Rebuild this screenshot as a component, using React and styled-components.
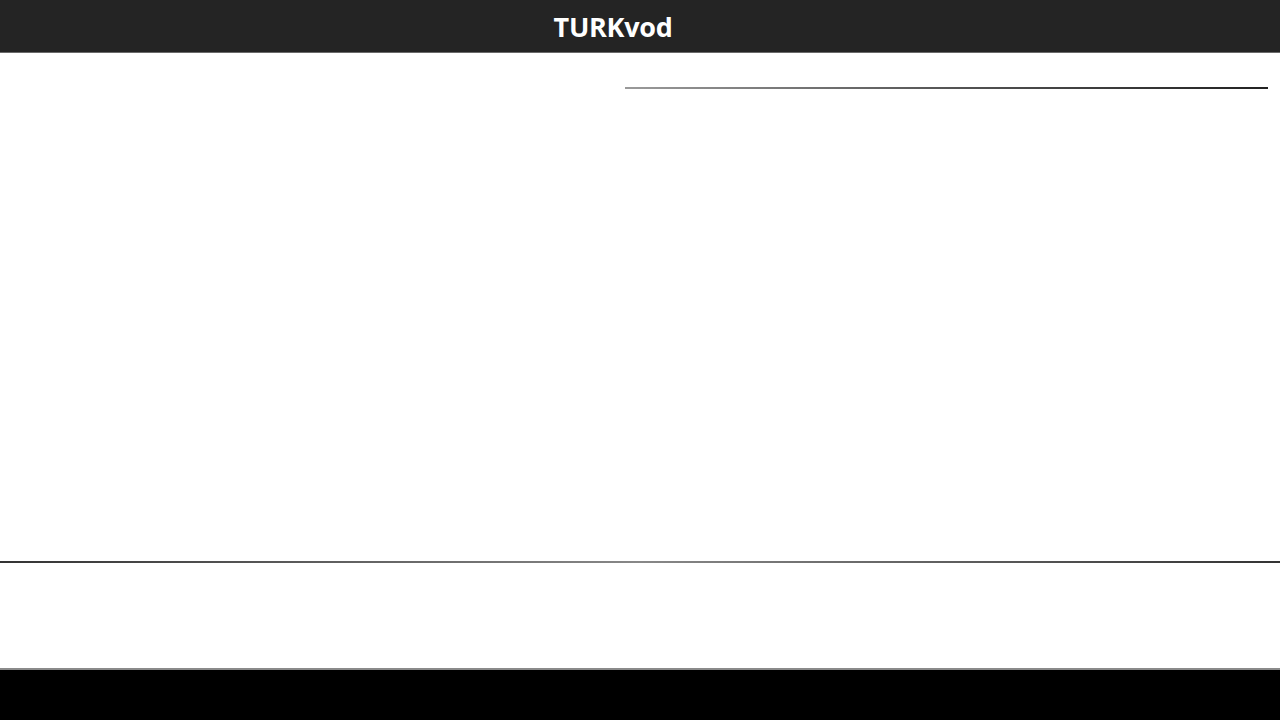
import styled, { createGlobalStyle } from "styled-components";

const GlobalStyle = createGlobalStyle`
  html, body {
    margin: 0;
    padding: 0;
    background: #fff;
    font-family: "Open Sans", "Liberation Sans", sans-serif;
  }
`;

const Page = styled.div`
  display: flex;
  flex-direction: column;
  height: 720px;
  overflow: hidden;
`;

const Header = styled.header`
  height: 52px;
  background: #242424;
  border-bottom: 1px solid #6a6a6a;
  display: flex;
  align-items: center;
  justify-content: center;
  padding-right: 54px;
`;

const Title = styled.h1`
  margin: 1px 0 0;
  color: #fff;
  font-size: 27px;
  font-weight: 700;
  letter-spacing: -0.3px;
`;

const Main = styled.main`
  display: grid;
  grid-template-columns: 625px 1fr;
  height: 508px;
`;

const LeftColumn = styled.section``;

const RightColumn = styled.section`
  padding: 34px 12px 0 0;
`;

const Rule = styled.div`
  height: 2px;
  background: linear-gradient(
    to right,
    ${({ $from }) => $from},
    ${({ $mid }) => $mid},
    ${({ $to }) => $to}
  );
`;

const Bottom = styled.section`
  height: 105px;
`;

const Footer = styled.footer`
  flex: 1;
  background: #000;
  border-top: 2px solid #8a8a8a;
`;

export default function App() {
  return (
    <>
      <GlobalStyle />
      <Page>
        <Header>
          <Title>TURKvod</Title>
        </Header>
        <Main>
          <LeftColumn />
          <RightColumn>
            <Rule $from="#9a9a9a" $mid="#555" $to="#222" />
          </RightColumn>
        </Main>
        <Rule $from="#333" $mid="#888" $to="#333" />
        <Bottom />
        <Footer />
      </Page>
    </>
  );
}
